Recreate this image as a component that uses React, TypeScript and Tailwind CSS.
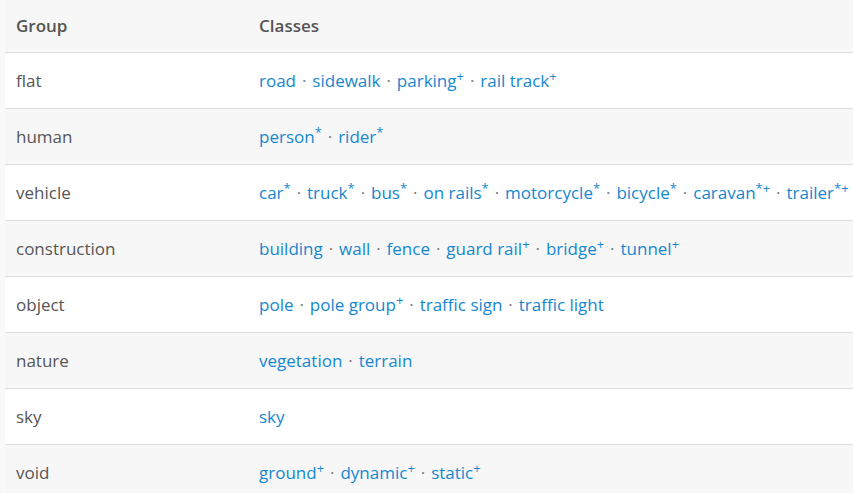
import React from 'react';

type Item = { name: string; sup?: string };

const rows: { group: string; items: Item[] }[] = [
  { group: 'flat', items: [{ name: 'road' }, { name: 'sidewalk' }, { name: 'parking', sup: '+' }, { name: 'rail track', sup: '+' }] },
  { group: 'human', items: [{ name: 'person', sup: '*' }, { name: 'rider', sup: '*' }] },
  {
    group: 'vehicle',
    items: [
      { name: 'car', sup: '*' },
      { name: 'truck', sup: '*' },
      { name: 'bus', sup: '*' },
      { name: 'on rails', sup: '*' },
      { name: 'motorcycle', sup: '*' },
      { name: 'bicycle', sup: '*' },
      { name: 'caravan', sup: '*+' },
      { name: 'trailer', sup: '*+' },
    ],
  },
  {
    group: 'construction',
    items: [{ name: 'building' }, { name: 'wall' }, { name: 'fence' }, { name: 'guard rail', sup: '+' }, { name: 'bridge', sup: '+' }, { name: 'tunnel', sup: '+' }],
  },
  { group: 'object', items: [{ name: 'pole' }, { name: 'pole group', sup: '+' }, { name: 'traffic sign' }, { name: 'traffic light' }] },
  { group: 'nature', items: [{ name: 'vegetation' }, { name: 'terrain' }] },
  { group: 'sky', items: [{ name: 'sky' }] },
  { group: 'void', items: [{ name: 'ground', sup: '+' }, { name: 'dynamic', sup: '+' }, { name: 'static', sup: '+' }] },
];

const App: React.FC = () => {
  return (
    <div className="min-h-[493px] w-[853px] overflow-hidden bg-[#f9f9f9] pl-[5px] font-['Open_Sans',sans-serif] text-[17px] text-[#555]">
      <table className="w-[848px] border-collapse">
        <thead>
          <tr className="h-[52px] border-b border-[#ddd] bg-[#f7f7f7]">
            <th className="w-[243px] pb-[1px] pl-[11px] text-left font-semibold">Group</th>
            <th className="pb-[1px] pl-[11px] text-left font-semibold">Classes</th>
          </tr>
        </thead>
        <tbody>
          {rows.map((row, idx) => (
            <tr key={row.group} className={`h-[56px] border-b border-[#ddd] ${idx % 2 === 0 ? 'bg-white' : 'bg-[#f7f7f7]'}`}>
              <td className="pt-[2px] pl-[11px]">{row.group}</td>
              <td className="whitespace-nowrap pt-[2px] pl-[11px]">
                {row.items.map((item, i) => (
                  <React.Fragment key={item.name}>
                    {i > 0 && <span className="mx-[1.5px] text-[#777]"> · </span>}
                    <span className="text-[#1587d0]">
                      {item.name}
                      {item.sup && <sup className="text-[13px]">{item.sup}</sup>}
                    </span>
                  </React.Fragment>
                ))}
              </td>
            </tr>
          ))}
        </tbody>
      </table>
    </div>
  );
};

export default App;
